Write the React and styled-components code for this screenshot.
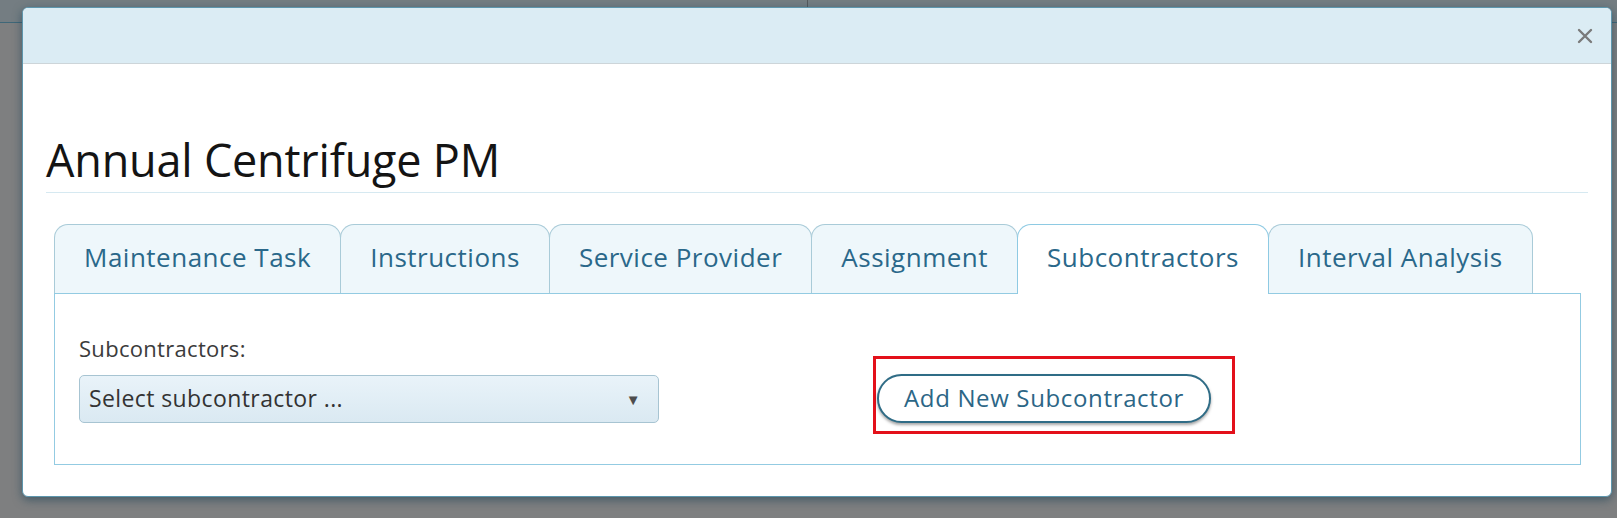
import React from "react";
import styled, { createGlobalStyle } from "styled-components";

const GlobalStyle = createGlobalStyle`
  html, body {
    margin: 0;
    padding: 0;
  }
  body {
    background: #7b7e80;
    font-family: "Open Sans", "Noto Sans", sans-serif;
    overflow: hidden;
  }
`;

const Page = styled.div`
  position: relative;
  width: 1617px;
  height: 518px;
  background: #7e7f80;
`;

const PageBar = styled.div`
  height: 22px;
  background: #747d82;
  border-bottom: 1px solid #3f6778;
  display: flex;
`;

const PageDivider = styled.span`
  margin-left: 807px;
  width: 1px;
  height: 8px;
  background: #55595c;
`;

// modal lies over the page, so it is placed absolutely
const Modal = styled.div`
  position: absolute;
  left: 22px;
  top: 7px;
  width: 1590px;
  box-sizing: border-box;
  background: #fff;
  border: 1px solid #5d96ad;
  border-radius: 6px;
  box-shadow: 0 3px 10px rgba(20, 60, 80, 0.55);
  overflow: hidden;
`;

const Header = styled.div`
  height: 55px;
  background: #dbecf4;
  border-bottom: 1px solid #cdd5d9;
  display: flex;
  justify-content: flex-end;
  align-items: center;
  padding-right: 18px;
`;

const CloseButton = styled.button`
  background: none;
  border: none;
  padding: 0;
  width: 16px;
  height: 16px;
  cursor: pointer;
  display: flex;
`;

const Body = styled.div`
  padding: 69px 23px 31px 23px;
`;

const Title = styled.h1`
  margin: 0;
  font-size: 45px;
  font-weight: 400;
  line-height: 54px;
  letter-spacing: -0.2px;
  color: #141414;
  padding-bottom: 5px;
  border-bottom: 1px solid #d6e9f1;
`;

const Tabs = styled.div`
  margin: 31px 7px 0 8px;
`;

const TabList = styled.div`
  display: flex;
  align-items: flex-end;
`;

const Tab = styled.div`
  position: relative;
  z-index: ${(p) => (p.$active ? 1 : 0)};
  box-sizing: border-box;
  height: ${(p) => (p.$active ? "70px" : "69px")};
  margin-bottom: ${(p) => (p.$active ? "-1px" : "0")};
  margin-right: -1px;
  padding: 0 29px 5px;
  display: flex;
  align-items: center;
  border: 1px solid ${(p) => (p.$active ? "#8ecae3" : "#a9cbd8")};
  border-bottom: none;
  border-radius: 14px 14px 0 0;
  background: ${(p) => (p.$active ? "#ffffff" : "#eef7fb")};
  color: #2a688a;
  font-size: 26px;
  letter-spacing: 0.5px;
  white-space: nowrap;
`;

const Panel = styled.div`
  border: 1px solid #93cbe2;
  padding: 39px 24px 30px;
  display: grid;
  grid-template-columns: 580px auto;
  column-gap: 214px;
  align-items: start;
`;

const Field = styled.div`
  display: flex;
  flex-direction: column;
`;

const Label = styled.label`
  font-size: 22px;
  line-height: 30px;
  letter-spacing: 0.3px;
  color: #3b3b3b;
  margin-bottom: 12px;
`;

const Select = styled.div`
  box-sizing: border-box;
  height: 48px;
  border: 1px solid #a7c4d2;
  border-radius: 5px;
  background: linear-gradient(#e9f3f9, #dae9f2);
  display: flex;
  align-items: center;
  justify-content: space-between;
  padding: 0 17px 3px 9px;
  font-size: 23px;
  letter-spacing: 0.4px;
  color: #333;
`;

const Arrow = styled.span`
  font-size: 15px;
  color: #4d4d4d;
  padding-top: 3px;
`;

const Highlight = styled.div`
  justify-self: start;
  margin-top: 23px;
  border: 3px solid #e3101a;
  padding: 15px 21px 8px 1px;
`;

const AddButton = styled.button`
  box-sizing: border-box;
  height: 49px;
  padding: 0 25px 2px;
  border: 2px solid #2f6c86;
  border-radius: 25px;
  background: #fff;
  box-shadow: 0 2px 3px rgba(0, 0, 0, 0.35);
  color: #2c6686;
  font-family: inherit;
  font-size: 24px;
  letter-spacing: 0.65px;
  cursor: pointer;
`;

const tabs = [
  "Maintenance Task",
  "Instructions",
  "Service Provider",
  "Assignment",
  "Subcontractors",
  "Interval Analysis",
];

export default function App() {
  return (
    <Page>
      <GlobalStyle />
      <PageBar>
        <PageDivider />
      </PageBar>
      <Modal>
        <Header>
          <CloseButton aria-label="Close">
            <svg width="16" height="16" viewBox="0 0 16 16">
              <path d="M2 2 L14 14 M14 2 L2 14" stroke="#7a7a7a" strokeWidth="2.4" strokeLinecap="round" />
            </svg>
          </CloseButton>
        </Header>
        <Body>
          <Title>Annual Centrifuge PM</Title>
          <Tabs>
            <TabList>
              {tabs.map((t) => (
                <Tab key={t} $active={t === "Subcontractors"}>
                  {t}
                </Tab>
              ))}
            </TabList>
            <Panel>
              <Field>
                <Label>Subcontractors:</Label>
                <Select>
                  <span>Select subcontractor ...</span>
                  <Arrow>▼</Arrow>
                </Select>
              </Field>
              <Highlight>
                <AddButton>Add New Subcontractor</AddButton>
              </Highlight>
            </Panel>
          </Tabs>
        </Body>
      </Modal>
    </Page>
  );
}
